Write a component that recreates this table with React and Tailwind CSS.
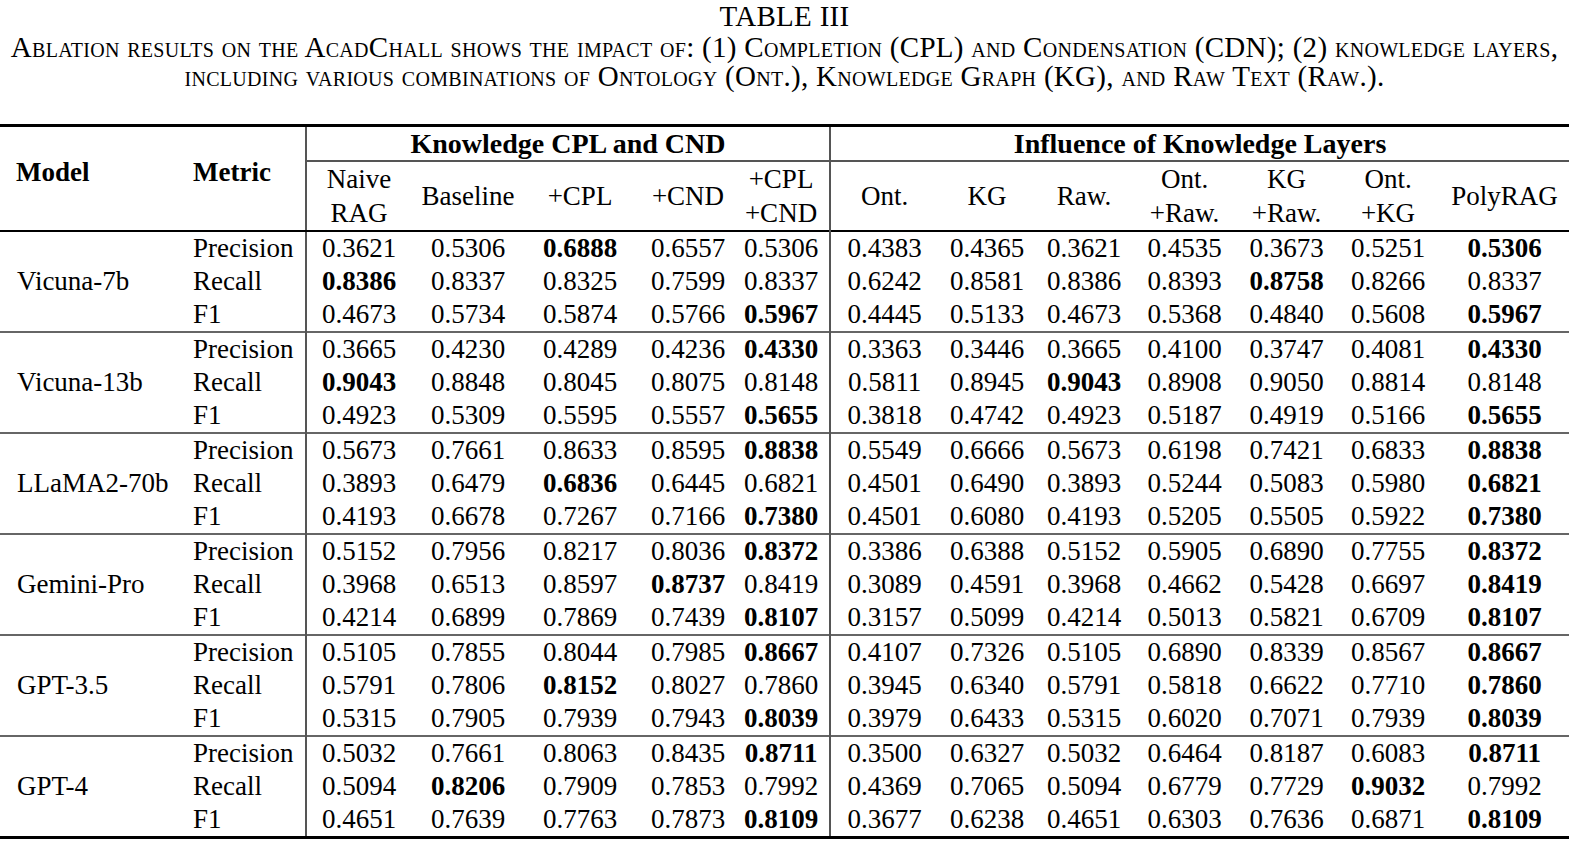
const models = [
  {
    name: "Vicuna-7b",
    rows: [
      ["Precision", "0.3621", "0.5306", "*0.6888", "0.6557", "0.5306", "0.4383", "0.4365", "0.3621", "0.4535", "0.3673", "0.5251", "*0.5306"],
      ["Recall", "*0.8386", "0.8337", "0.8325", "0.7599", "0.8337", "0.6242", "0.8581", "0.8386", "0.8393", "*0.8758", "0.8266", "0.8337"],
      ["F1", "0.4673", "0.5734", "0.5874", "0.5766", "*0.5967", "0.4445", "0.5133", "0.4673", "0.5368", "0.4840", "0.5608", "*0.5967"],
    ],
  },
  {
    name: "Vicuna-13b",
    rows: [
      ["Precision", "0.3665", "0.4230", "0.4289", "0.4236", "*0.4330", "0.3363", "0.3446", "0.3665", "0.4100", "0.3747", "0.4081", "*0.4330"],
      ["Recall", "*0.9043", "0.8848", "0.8045", "0.8075", "0.8148", "0.5811", "0.8945", "*0.9043", "0.8908", "0.9050", "0.8814", "0.8148"],
      ["F1", "0.4923", "0.5309", "0.5595", "0.5557", "*0.5655", "0.3818", "0.4742", "0.4923", "0.5187", "0.4919", "0.5166", "*0.5655"],
    ],
  },
  {
    name: "LLaMA2-70b",
    rows: [
      ["Precision", "0.5673", "0.7661", "0.8633", "0.8595", "*0.8838", "0.5549", "0.6666", "0.5673", "0.6198", "0.7421", "0.6833", "*0.8838"],
      ["Recall", "0.3893", "0.6479", "*0.6836", "0.6445", "0.6821", "0.4501", "0.6490", "0.3893", "0.5244", "0.5083", "0.5980", "*0.6821"],
      ["F1", "0.4193", "0.6678", "0.7267", "0.7166", "*0.7380", "0.4501", "0.6080", "0.4193", "0.5205", "0.5505", "0.5922", "*0.7380"],
    ],
  },
  {
    name: "Gemini-Pro",
    rows: [
      ["Precision", "0.5152", "0.7956", "0.8217", "0.8036", "*0.8372", "0.3386", "0.6388", "0.5152", "0.5905", "0.6890", "0.7755", "*0.8372"],
      ["Recall", "0.3968", "0.6513", "0.8597", "*0.8737", "0.8419", "0.3089", "0.4591", "0.3968", "0.4662", "0.5428", "0.6697", "*0.8419"],
      ["F1", "0.4214", "0.6899", "0.7869", "0.7439", "*0.8107", "0.3157", "0.5099", "0.4214", "0.5013", "0.5821", "0.6709", "*0.8107"],
    ],
  },
  {
    name: "GPT-3.5",
    rows: [
      ["Precision", "0.5105", "0.7855", "0.8044", "0.7985", "*0.8667", "0.4107", "0.7326", "0.5105", "0.6890", "0.8339", "0.8567", "*0.8667"],
      ["Recall", "0.5791", "0.7806", "*0.8152", "0.8027", "0.7860", "0.3945", "0.6340", "0.5791", "0.5818", "0.6622", "0.7710", "*0.7860"],
      ["F1", "0.5315", "0.7905", "0.7939", "0.7943", "*0.8039", "0.3979", "0.6433", "0.5315", "0.6020", "0.7071", "0.7939", "*0.8039"],
    ],
  },
  {
    name: "GPT-4",
    rows: [
      ["Precision", "0.5032", "0.7661", "0.8063", "0.8435", "*0.8711", "0.3500", "0.6327", "0.5032", "0.6464", "0.8187", "0.6083", "*0.8711"],
      ["Recall", "0.5094", "*0.8206", "0.7909", "0.7853", "0.7992", "0.4369", "0.7065", "0.5094", "0.6779", "0.7729", "*0.9032", "0.7992"],
      ["F1", "0.4651", "0.7639", "0.7763", "0.7873", "*0.8109", "0.3677", "0.6238", "0.4651", "0.6303", "0.7636", "0.6871", "*0.8109"],
    ],
  },
];

// sub-column headers, two lines where the paper breaks them
const subHeads = [
  ["Naive", "RAG"],
  ["Baseline"],
  ["+CPL"],
  ["+CND"],
  ["+CPL", "+CND"],
  ["Ont."],
  ["KG"],
  ["Raw."],
  ["Ont.", "+Raw."],
  ["KG", "+Raw."],
  ["Ont.", "+KG"],
  ["PolyRAG"],
];

const colWidths = ["180px", "126px", "105px", "114px", "110px", "106px", "89px", "108px", "98px", "96px", "105px", "99px", "104px", "129px"];

const Cell = ({ value, idx }) => {
  const bold = value.startsWith("*");
  const text = bold ? value.slice(1) : value;
  const divider = idx === 0 || idx === 5 ? "border-l-2 border-l-[#555]" : "";
  const pad = idx === 4 ? "pr-[8px]" : "";
  return (
    <td className={`h-[33px] p-0 text-center ${divider} ${pad} ${bold ? "font-bold" : ""}`}>
      {text}
    </td>
  );
};

const App = () => {
  return (
    <div className="w-[1569px] h-[841px] bg-white text-black [font-family:'Liberation_Serif',serif] text-[27px] overflow-hidden">
      {/* Caption */}
      <div className="pt-[1px] text-center text-[29px] leading-[30px] tracking-[0.3px]">TABLE III</div>
      <div className="mt-[2px] text-center text-[29px] leading-[29px] tracking-[0.3px] [font-variant:small-caps]">
        Ablation results on the AcadChall shows the impact of: (1) Completion (CPL) and Condensation (CDN); (2) knowledge layers,
        <br />
        including various combinations of Ontology (Ont.), Knowledge Graph (KG), and Raw Text (Raw.).
      </div>

      {/* Table */}
      <table className="mt-[33px] w-full table-fixed border-collapse leading-[33px]">
        <colgroup>
          {colWidths.map((w, i) => (
            <col key={i} style={{ width: w }} />
          ))}
        </colgroup>
        <thead>
          <tr className="border-t-[3px] border-black">
            <th rowSpan={2} className="p-0 pl-[16px] pb-[12px] text-left font-bold border-b-2 border-b-black">
              Model
            </th>
            <th rowSpan={2} className="p-0 pl-[13px] pb-[12px] text-left font-bold border-b-2 border-b-black">
              Metric
            </th>
            <th colSpan={5} className="h-[33px] p-0 text-center text-[28px] font-bold border-l-2 border-l-[#555] border-b-2 border-b-[#555]">
              Knowledge CPL and CND
            </th>
            <th colSpan={7} className="h-[33px] p-0 text-center text-[28px] font-bold border-l-2 border-l-[#555] border-b-2 border-b-[#555]">
              Influence of Knowledge Layers
            </th>
          </tr>
          <tr className="border-b-2 border-black">
            {subHeads.map((lines, i) => (
              <th
                key={i}
                className={`h-[68px] p-0 text-center font-normal leading-[34px] ${
                  i === 0 || i === 5 ? "border-l-2 border-l-[#555]" : ""
                } ${i === 4 ? "pr-[8px]" : ""}`}
              >
                {lines.map((l, j) => (
                  <div key={j}>{l}</div>
                ))}
              </th>
            ))}
          </tr>
        </thead>
        <tbody>
          {models.map((m, gi) => (
            <>
              {m.rows.map((row, ri) => (
                <tr
                  key={`${gi}-${ri}`}
                  className={ri === 0 && gi > 0 ? "border-t-2 border-t-[#666]" : ""}
                >
                  {ri === 0 && (
                    <td rowSpan={3} className="p-0 pl-[17px] text-left align-middle">
                      {m.name}
                    </td>
                  )}
                  <td className="h-[33px] p-0 pl-[13px] text-left">{row[0]}</td>
                  {row.slice(1).map((v, ci) => (
                    <Cell key={ci} value={v} idx={ci} />
                  ))}
                </tr>
              ))}
            </>
          ))}
        </tbody>
        <tfoot>
          <tr className="border-t-[3px] border-black">
            <td colSpan={14} className="p-0 h-0"></td>
          </tr>
        </tfoot>
      </table>
    </div>
  );
};

export default App;
